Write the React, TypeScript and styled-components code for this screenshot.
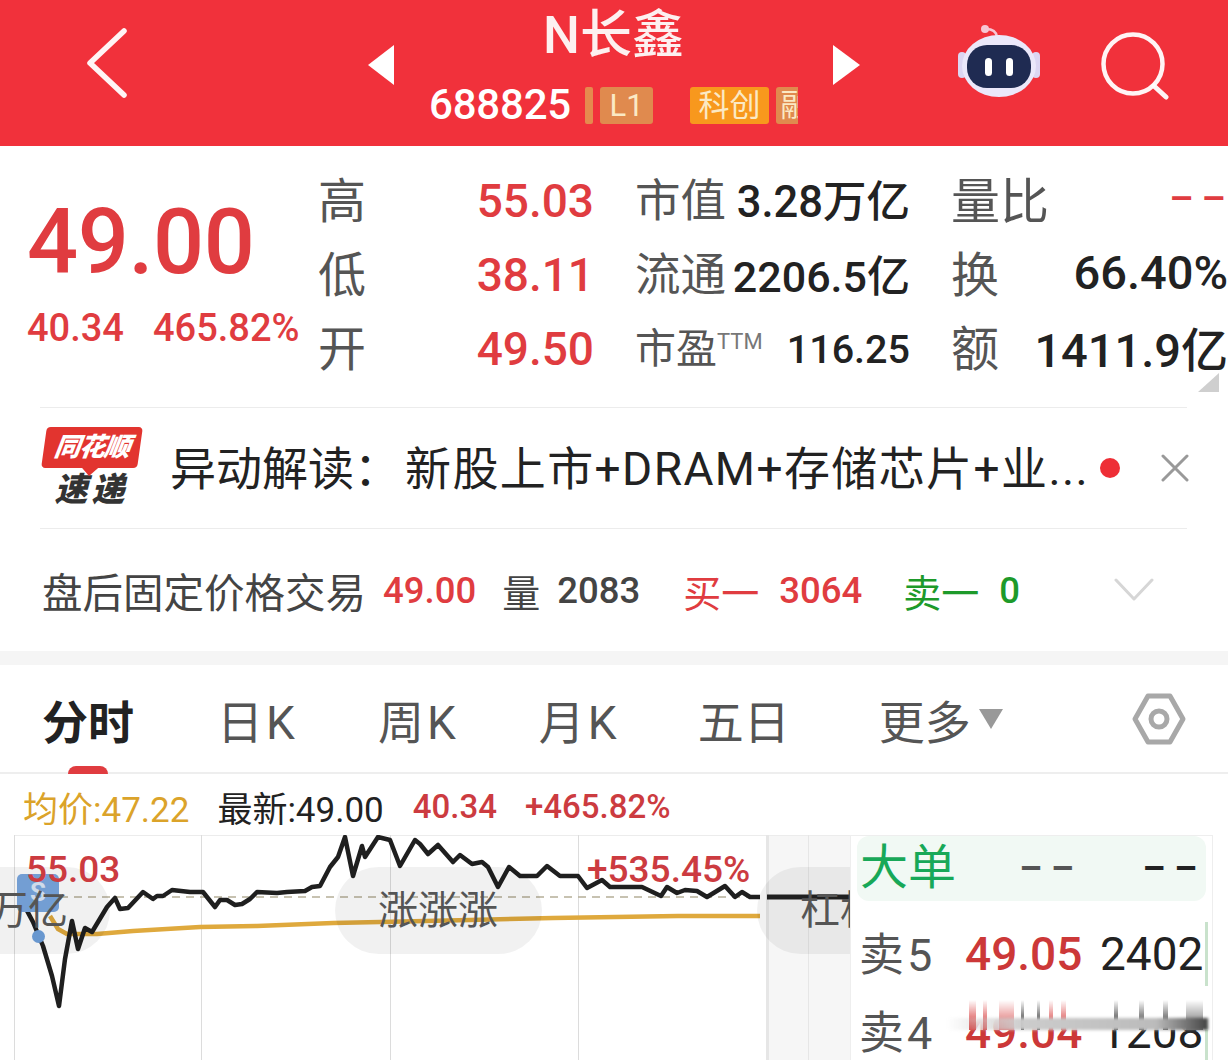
import React from 'react';
import styled, { createGlobalStyle } from 'styled-components';

const RED = '#e03c40';
const CJK = `Roboto, "Noto Sans CJK SC", sans-serif`;

const GlobalStyle = createGlobalStyle`
  html, body { margin: 0; padding: 0; background: #fff; }
  body { font-family: ${CJK}; }
`;

const blackLine = '25,908 33,923 43,947 52,977 59,1007 65,960 72,922 78,950 85,929 92,933 107,908 115,899 120,910 128,909 143,893 153,900 157,897 163,897 172,891 190,893 203,893 215,908 220,901 227,901 235,906 242,905 250,900 257,893 277,894 287,893 305,892 312,888 320,887 330,868 338,858 345,838 353,877 362,847 365,858 378,838 390,841 400,867 415,841 420,845 428,855 438,846 453,863 460,856 472,865 482,863 488,868 498,888 509,868 520,877 537,877 547,867 560,877 578,877 587,889 602,881 610,888 642,888 661,897 667,888 677,894 685,891 697,892 707,898 725,887 735,898 742,893 750,898 760,898';
const goldLine = '50,917 58,930 67,935 97,935 133,932 200,928 257,927 333,924 380,923 470,921 553,919 678,917 760,917';
const gridX = [14, 201, 390, 578, 767, 808];

const streaks = [
  { x: 968, w: 7, c: '#d83a3a' }, { x: 982, w: 4, c: '#d83a3a' }, { x: 998, w: 15, c: '#e06a6a' },
  { x: 1020, w: 3, c: '#222' }, { x: 1036, w: 3, c: '#222' }, { x: 1048, w: 4, c: '#d83a3a' },
  { x: 1060, w: 5, c: '#d83a3a' }, { x: 1113, w: 4, c: '#222' }, { x: 1138, w: 5, c: '#333' },
  { x: 1162, w: 5, c: '#333' }, { x: 1185, w: 17, c: '#777' },
];

const Page = styled.div`
  width: 1228px;
  height: 1061px;
  overflow: hidden;
  background: #fff;
`;

/* top red bar */
const Header = styled.header`
  height: 146px;
  background: #f1313b;
  display: flex;
  align-items: center;
  padding-left: 86px;
  color: #fff;
`;
const BackIcon = styled.svg`
  flex: none;
  margin-top: -20px;
`;
const Arrow = styled.div<{ $dir: 'left' | 'right' }>`
  width: 0;
  height: 0;
  border-top: 20px solid transparent;
  border-bottom: 20px solid transparent;
  ${p => p.$dir === 'left'
    ? 'border-right: 26px solid #fff; margin-left: 238px;'
    : 'border-left: 27px solid #fff;'}
  margin-top: -16px;
`;
const TitleBox = styled.div`
  width: 439px;
  display: flex;
  flex-direction: column;
  align-items: center;
  height: 146px;
`;
const StockName = styled.div`
  font-size: 52px;
  line-height: 56px;
  margin-top: 8px;
  font-weight: 500;
  color: #fdf0f0;
`;
const TagRow = styled.div`
  width: 369px;
  margin-top: 20px;
  height: 42px;
  display: flex;
  align-items: center;
  overflow: hidden;
`;
const Code = styled.span`
  font-size: 42px;
  font-weight: 500;
  line-height: 42px;
  margin-right: 14px;
  letter-spacing: -0.2px;
`;
const TagBar = styled.span`
  width: 8px;
  height: 37px;
  border-radius: 2px;
  background: #e58a4e;
  margin-right: 7px;
  flex: none;
`;
const Tag = styled.span<{ $bright?: boolean; $w: number; $gap: number }>`
  flex: none;
  width: ${p => p.$w}px;
  height: 37px;
  line-height: 37px;
  margin-right: ${p => p.$gap}px;
  border-radius: 3px;
  text-align: center;
  font-size: 31px;
  color: #fbe9c4;
  background: ${p => (p.$bright ? '#f8981d' : '#e08a4e')};
  overflow: hidden;
  white-space: nowrap;
`;
const RobotIcon = styled.svg`
  margin-left: 98px;
  margin-top: -24px;
  flex: none;
`;
const SearchIcon = styled.svg`
  margin-left: 60px;
  margin-top: -14px;
  flex: none;
`;

/* price block */
const Quote = styled.section`
  position: relative;
  height: 261px;
  display: flex;
  padding-left: 28px;
  box-sizing: border-box;
`;
const PriceBox = styled.div`
  width: 290px;
  flex: none;
`;
const BigPrice = styled.div`
  font-size: 90px;
  line-height: 90px;
  margin-top: 52px;
  margin-left: -1px;
  font-weight: 500;
  color: ${RED};
  letter-spacing: -0.4px;
`;
const PriceChange = styled.div`
  display: flex;
  gap: 29px;
  margin-top: 20px;
  margin-left: -1px;
  font-size: 38px;
  font-weight: 500;
  line-height: 40px;
  color: ${RED};
  white-space: nowrap;
`;
const QuoteGrid = styled.div`
  display: grid;
  grid-template-columns: 276px 275px 277px;
  grid-auto-rows: 74px;
  column-gap: 41px;
  padding-top: 18px;
`;
const Cell = styled.div`
  display: flex;
  justify-content: space-between;
  align-items: center;
  white-space: nowrap;
`;
const Label = styled.span<{ $size?: number }>`
  font-size: ${p => p.$size ?? 48}px;
  color: #555;
  font-weight: 400;
  margin-top: -8px;
`;
const Sup = styled.span`
  font-size: 22px;
  vertical-align: 14px;
  color: #777;
`;
const Num = styled.span<{ $red?: boolean; $size?: number; $dash?: boolean }>`
  font-size: ${p => p.$size ?? 46}px;
  font-weight: 500;
  color: ${p => (p.$red ? RED : '#222')};
  ${p => p.$dash && 'letter-spacing: 8px; margin-right: -6px;'}
`;
const SoftNum = styled(Num)`
  margin-top: -5px;
`;
const CornerMark = styled.div`
  position: absolute;
  right: 9px;
  bottom: 15px;
  width: 0;
  height: 0;
  border-left: 21px solid transparent;
  border-bottom: 19px solid #cfcfcf;
`;

/* news row */
const NewsRow = styled.section`
  margin: 0 41px 0 40px;
  height: 122px;
  box-sizing: border-box;
  border-top: 1px solid #ececec;
  border-bottom: 1px solid #ececec;
  display: flex;
  align-items: center;
  padding-left: 2px;
`;
const Logo = styled.div`
  width: 99px;
  flex: none;
  display: flex;
  flex-direction: column;
  align-items: center;
`;
const LogoBadge = styled.div`
  position: relative;
  width: 96px;
  height: 41px;
  line-height: 40px;
  background: #e2342f;
  border-radius: 4px;
  transform: skewX(-8deg);
  text-align: center;
  color: #fff;
  font-size: 26px;
  font-weight: 900;
  font-style: italic;
  letter-spacing: -1px;
  &::after {
    content: '';
    position: absolute;
    left: 41px;
    bottom: -8px;
    border-left: 8px solid transparent;
    border-right: 8px solid transparent;
    border-top: 8px solid #e2342f;
  }
`;
const LogoSub = styled.div`
  margin-top: 2px;
  font-size: 33px;
  line-height: 40px;
  font-weight: 900;
  font-style: italic;
  letter-spacing: 4px;
  color: #333;
`;
const NewsLabel = styled.span`
  margin-left: 29px;
  margin-top: -6px;
  width: 235px;
  flex: none;
  font-size: 46px;
  color: #222;
  white-space: nowrap;
`;
const NewsText = styled.span`
  width: 684px;
  flex: none;
  margin-top: -6px;
  font-size: 46px;
  letter-spacing: 1.4px;
  color: #222;
  white-space: nowrap;
  overflow: hidden;
`;
const Dot = styled.span`
  width: 20px;
  height: 20px;
  border-radius: 50%;
  background: #ee2e36;
  margin-left: 11px;
  flex: none;
`;
const CloseIcon = styled.svg`
  margin-left: 41px;
  flex: none;
`;

/* after hours */
const AfterRow = styled.section`
  height: 122px;
  padding-left: 42px;
  display: flex;
  align-items: center;
  white-space: nowrap;
`;
const AfterText = styled.span<{ $size?: number; $color?: string; $ml?: number; $num?: boolean }>`
  font-size: ${p => p.$size ?? 36.5}px;
  font-weight: ${p => (p.$num ? 500 : 400)};
  color: ${p => p.$color ?? '#444'};
  margin-left: ${p => p.$ml ?? 0}px;
`;
const ChevronIcon = styled.svg`
  margin-left: 94px;
  flex: none;
`;
const Band = styled.div`
  height: 14px;
  background: #f5f5f5;
`;

/* period tabs */
const Tabs = styled.nav`
  position: relative;
  height: 109px;
  box-sizing: border-box;
  border-bottom: 2px solid #eee;
  display: flex;
  align-items: center;
  padding-left: 42px;
  white-space: nowrap;
`;
const Tab = styled.span<{ $active?: boolean; $ml?: number; $spaced?: boolean }>`
  position: relative;
  margin-left: ${p => p.$ml ?? 0}px;
  font-size: 46px;
  font-weight: ${p => (p.$active ? 700 : 400)};
  color: ${p => (p.$active ? '#222' : '#555')};
  letter-spacing: ${p => (p.$spaced ? 3 : 0)}px;
  ${p => p.$active && `
    &::after {
      content: '';
      position: absolute;
      left: 26px;
      bottom: -22px;
      width: 40px;
      height: 8px;
      border-radius: 8px 8px 0 0;
      background: ${RED};
    }
  `}
`;
const MoreCaret = styled.span`
  width: 0;
  height: 0;
  margin-left: 8px;
  border-left: 12px solid transparent;
  border-right: 12px solid transparent;
  border-top: 20px solid #999;
`;
const HexIcon = styled.svg`
  margin-left: 129px;
  flex: none;
`;

/* chart legend */
const Legend = styled.div`
  height: 61px;
  padding: 3px 0 0 23px;
  display: flex;
  align-items: center;
  white-space: nowrap;
  box-sizing: border-box;
`;
const LegendItem = styled.span<{ $color: string; $ml?: number; $strong?: boolean }>`
  color: ${p => p.$color};
  margin-left: ${p => p.$ml ?? 0}px;
  font-size: ${p => (p.$strong ? 33 : 35)}px;
  font-weight: ${p => (p.$strong ? 500 : 400)};
`;

/* chart + order book */
const ChartRow = styled.section`
  display: flex;
  height: 225px;
`;
const Plot = styled.div`
  position: relative;
  width: 850px;
  height: 225px;
  flex: none;
  overflow: hidden;
`;
const PlotSvg = styled.svg`
  display: block;
`;
const PlotLabel = styled.span<{ $x: number; $y: number }>`
  position: absolute;
  left: ${p => p.$x}px;
  top: ${p => p.$y}px;
  font-size: 37px;
  font-weight: 500;
  line-height: 40px;
  color: #cc3b40;
  white-space: nowrap;
`;
const Danmaku = styled.div<{ $x: number; $w: number }>`
  position: absolute;
  left: ${p => p.$x}px;
  top: 32px;
  width: ${p => p.$w}px;
  height: 87px;
  border-radius: 44px;
  background: rgba(0, 0, 0, 0.055);
  color: #555;
  font-size: 40px;
  line-height: 87px;
  white-space: nowrap;
`;
const DanmakuText = styled.span<{ $x: number }>`
  position: absolute;
  left: ${p => p.$x}px;
  top: 0;
`;
const BlueBadge = styled.div`
  position: absolute;
  left: 17px;
  top: 39px;
  width: 42px;
  height: 38px;
  border-radius: 5px;
  background: #7aa8e0;
  color: #dbe8f8;
  font-size: 26px;
  font-weight: 700;
  line-height: 36px;
  text-align: center;
`;
const BlueDot = styled.div`
  position: absolute;
  left: 32px;
  top: 95px;
  width: 13px;
  height: 13px;
  border-radius: 50%;
  background: #6fa0dc;
`;
const Book = styled.aside`
  position: relative;
  width: 363px;
  height: 225px;
  box-sizing: border-box;
  border: 1px solid #eee;
  border-bottom: none;
  overflow: hidden;
`;
const BookHead = styled.div`
  margin: 0 6px 0 6px;
  height: 65px;
  box-sizing: border-box;
  border-radius: 12px;
  background: #f1f9f4;
  padding: 0 0 0 3px;
  display: flex;
  align-items: center;
`;
const BookTitle = styled.span`
  font-size: 48px;
  color: #18a858;
  flex: 1;
  margin-top: -12px;
`;
const Dash = styled.span<{ $dark?: boolean; $ml: number }>`
  font-size: 36px;
  font-weight: 700;
  letter-spacing: 9px;
  margin-left: ${p => p.$ml}px;
  color: ${p => (p.$dark ? '#222' : '#555')};
`;
const BookRow = styled.div`
  position: relative;
  height: 78px;
  display: flex;
  align-items: center;
  padding-left: 8px;
  white-space: nowrap;
`;
const BookList = styled.div`
  padding-top: 14px;
`;
const BookLabel = styled.span`
  width: 106px;
  flex: none;
  font-size: 45px;
  letter-spacing: 3px;
  color: #555;
  margin-top: -5px;
`;
const BookPrice = styled.span`
  width: 135px;
  flex: none;
  font-size: 46px;
  font-weight: 500;
  color: #cc3838;
`;
const BookVol = styled.span`
  font-size: 46px;
  color: #222;
`;
const VolBar = styled.span`
  position: absolute;
  left: 354px;
  top: 7px;
  width: 3px;
  height: 64px;
  background: #c9e2cc;
`;
/* the row is cut by a smeared band in the capture */
const Smear = styled.div`
  position: absolute;
  left: 95px;
  top: 164px;
  width: 262px;
  height: 30px;
  background: linear-gradient(to bottom, #fff 0, #fff 60%, rgba(255, 255, 255, 0.6) 100%);
`;
const SmearBand = styled.div`
  position: absolute;
  left: 0;
  right: 0;
  bottom: 0;
  height: 12px;
  background: linear-gradient(to right, transparent, #ccc 30%, #bbb 80%, #444 100%);
  filter: blur(1.5px);
`;
const Streak = styled.span`
  position: absolute;
  top: 0;
  height: 30px;
  -webkit-mask-image: linear-gradient(to bottom, transparent, #000 90%);
  mask-image: linear-gradient(to bottom, transparent, #000 90%);
`;

export default function App() {
  return (
    <Page>
      <GlobalStyle />
      <Header>
        <BackIcon width="44" height="72" viewBox="0 0 44 72">
          <path d="M38 4 L4 36 L38 68" fill="none" stroke="#fff" strokeWidth="5.5" strokeLinecap="round" strokeLinejoin="round" opacity="0.95" />
        </BackIcon>
        <Arrow $dir="left" />
        <TitleBox>
          <StockName>N长鑫</StockName>
          <TagRow>
            <Code>688825</Code>
            <TagBar />
            <Tag $w={53} $gap={37}>L1</Tag>
            <Tag $bright $w={79} $gap={7}>科创</Tag>
            <Tag $w={40} $gap={0}>融</Tag>
          </TagRow>
        </TitleBox>
        <Arrow $dir="right" />
        <RobotIcon width="82" height="74" viewBox="0 0 82 74">
          <circle cx="27" cy="5" r="4" fill="#f7c6d4" />
          <path d="M28 5 Q38 5 39 13" fill="none" stroke="#f7c6d4" strokeWidth="2.5" />
          <rect x="0" y="28" width="8" height="26" rx="4" fill="#dcd6f2" />
          <rect x="74" y="28" width="8" height="26" rx="4" fill="#dcd6f2" />
          <ellipse cx="41" cy="42" rx="37" ry="31" fill="#ebe8fa" />
          <rect x="9" y="21" width="64" height="43" rx="20" fill="#1f2b52" />
          <rect x="27" y="34" width="7" height="18" rx="3.5" fill="#fff" />
          <rect x="48" y="34" width="7" height="18" rx="3.5" fill="#fff" />
        </RobotIcon>
        <SearchIcon width="70" height="70" viewBox="0 0 70 70">
          <circle cx="33" cy="33" r="29.5" fill="none" stroke="#fff" strokeWidth="4.5" opacity="0.95" />
          <path d="M54 55 L66 66" stroke="#fff" strokeWidth="5" strokeLinecap="round" opacity="0.95" />
        </SearchIcon>
      </Header>

      <Quote>
        <PriceBox>
          <BigPrice>49.00</BigPrice>
          <PriceChange>
            <span>40.34</span>
            <span>465.82%</span>
          </PriceChange>
        </PriceBox>
        <QuoteGrid>
          <Cell><Label>高</Label><Num $red>55.03</Num></Cell>
          <Cell><Label $size={45.5}>市值</Label><SoftNum $size={43.5}>3.28万亿</SoftNum></Cell>
          <Cell><Label $size={49}>量比</Label><SoftNum $red $dash $size={38}>––</SoftNum></Cell>
          <Cell><Label>低</Label><Num $red>38.11</Num></Cell>
          <Cell><Label $size={45.5}>流通</Label><SoftNum $size={43}>2206.5亿</SoftNum></Cell>
          <Cell><Label>换</Label><SoftNum $size={47}>66.40%</SoftNum></Cell>
          <Cell><Label>开</Label><Num $red>49.50</Num></Cell>
          <Cell><Label $size={41}>市盈<Sup>TTM</Sup></Label><Num $size={39.5}>116.25</Num></Cell>
          <Cell><Label>额</Label><SoftNum $size={47}>1411.9亿</SoftNum></Cell>
        </QuoteGrid>
        <CornerMark />
      </Quote>

      <NewsRow>
        <Logo>
          <LogoBadge>同花顺</LogoBadge>
          <LogoSub>速递</LogoSub>
        </Logo>
        <NewsLabel>异动解读：</NewsLabel>
        <NewsText>新股上市+DRAM+存储芯片+业...</NewsText>
        <Dot />
        <CloseIcon width="28" height="28" viewBox="0 0 28 28">
          <path d="M2 2 L26 26 M26 2 L2 26" stroke="#999" strokeWidth="3" strokeLinecap="round" />
        </CloseIcon>
      </NewsRow>

      <AfterRow>
        <AfterText $size={40.5}>盘后固定价格交易</AfterText>
        <AfterText $num $color={RED} $ml={17}>49.00</AfterText>
        <AfterText $size={38} $ml={26}>量</AfterText>
        <AfterText $num $ml={17}>2083</AfterText>
        <AfterText $size={38} $color={RED} $ml={43}>买一</AfterText>
        <AfterText $num $color={RED} $ml={20}>3064</AfterText>
        <AfterText $size={38} $color="#1d9a2a" $ml={41}>卖一</AfterText>
        <AfterText $num $color="#1d9a2a" $ml={20}>0</AfterText>
        <ChevronIcon width="40" height="24" viewBox="0 0 40 24">
          <path d="M2 2 L20 21 L38 2" fill="none" stroke="#d6d6d6" strokeWidth="3" strokeLinecap="round" strokeLinejoin="round" />
        </ChevronIcon>
      </AfterRow>
      <Band />

      <Tabs>
        <Tab $active>分时</Tab>
        <Tab $ml={83} $spaced>日K</Tab>
        <Tab $ml={80} $spaced>周K</Tab>
        <Tab $ml={80} $spaced>月K</Tab>
        <Tab $ml={78}>五日</Tab>
        <Tab $ml={89}>更多</Tab>
        <MoreCaret />
        <HexIcon width="54" height="52" viewBox="0 0 54 52">
          <path d="M16 3 H38 L51 26 L38 49 H16 L3 26 Z" fill="none" stroke="#a8a8a8" strokeWidth="5" strokeLinejoin="round" />
          <circle cx="27" cy="26" r="8" fill="none" stroke="#a8a8a8" strokeWidth="5" />
        </HexIcon>
      </Tabs>

      <Legend>
        <LegendItem $color="#dba32a">均价:47.22</LegendItem>
        <LegendItem $color="#222" $ml={28}>最新:49.00</LegendItem>
        <LegendItem $color="#cc3b40" $ml={29} $strong>40.34</LegendItem>
        <LegendItem $color="#cc3b40" $ml={28} $strong>+465.82%</LegendItem>
      </Legend>

      <ChartRow>
        <Plot>
          <PlotSvg width="850" height="225" viewBox="0 836 850 225">
            <rect x="767" y="836" width="83" height="225" fill="#f6f6f6" />
            <line x1="14" y1="836.5" x2="850" y2="836.5" stroke="#ececec" />
            {gridX.map(x => (
              <line key={x} x1={x + 0.5} y1="836" x2={x + 0.5} y2="1061" stroke={x > 700 ? '#e6e6e6' : '#dcdcdc'} strokeWidth={x === 767 ? 3 : 1} />
            ))}
            <line x1="60" y1="898" x2="760" y2="898" stroke="#b5ae98" strokeWidth="1.5" strokeDasharray="8 6" />
            <polyline points={goldLine} fill="none" stroke="#dfa93d" strokeWidth="4.5" strokeLinejoin="round" />
            <polyline points={blackLine} fill="none" stroke="#1f1f1f" strokeWidth="4.5" strokeLinejoin="round" />
            <line x1="767" y1="898" x2="850" y2="898" stroke="#222" strokeWidth="5" />
          </PlotSvg>
          <BlueBadge>S</BlueBadge>
          <BlueDot />
          <Danmaku $x={-100} $w={210}>
            <DanmakuText $x={88}>万亿</DanmakuText>
          </Danmaku>
          <Danmaku $x={335} $w={207}>
            <DanmakuText $x={43}>涨涨涨</DanmakuText>
          </Danmaku>
          <Danmaku $x={757} $w={200}>
            <DanmakuText $x={43}>杠杆</DanmakuText>
          </Danmaku>
          <PlotLabel $x={26} $y={15}>55.03</PlotLabel>
          <PlotLabel $x={587} $y={15}>+535.45%</PlotLabel>
        </Plot>
        <Book>
          <BookHead>
            <BookTitle>大单</BookTitle>
            <Dash $ml={0}>––</Dash>
            <Dash $dark $ml={60}>––</Dash>
          </BookHead>
          <BookList>
            <BookRow>
              <BookLabel>卖5</BookLabel>
              <BookPrice>49.05</BookPrice>
              <BookVol>2402</BookVol>
              <VolBar />
            </BookRow>
            <BookRow>
              <BookLabel>卖4</BookLabel>
              <BookPrice>49.04</BookPrice>
              <BookVol>1208</BookVol>
              <VolBar />
            </BookRow>
          </BookList>
          <Smear>
            {streaks.map(s => (
              <Streak key={s.x} style={{ left: s.x - 945, width: s.w, background: s.c }} />
            ))}
            <SmearBand />
          </Smear>
        </Book>
      </ChartRow>
    </Page>
  );
}
